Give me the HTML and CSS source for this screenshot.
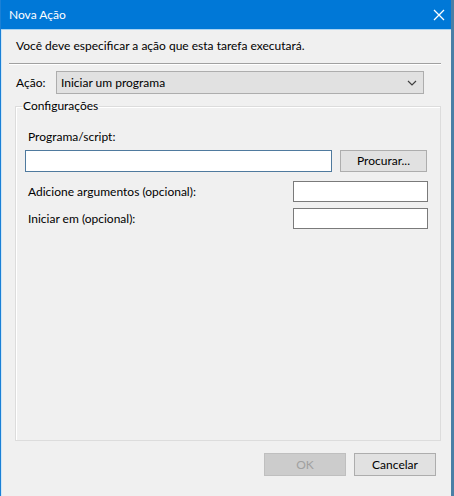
FILE: index.html
```html
<!DOCTYPE html>
<html lang="pt-BR">
<head>
<meta charset="utf-8">
<title>Nova Ação</title>
<link rel="stylesheet" href="styles.css">
</head>
<body>
<div class="window">
  <div class="titlebar">
    <span class="title">Nova Ação</span>
    <span class="close">
      <svg width="12" height="12" viewBox="0 0 12 12"><path d="M1 1 L11 11 M11 1 L1 11" stroke="#fff" stroke-width="1.3" fill="none"/></svg>
    </span>
  </div>
  <div class="content">
    <p class="intro">Você deve especificar a ação que esta tarefa executará.</p>
    <div class="separator"></div>
    <div class="action-row">
      <span class="action-label">Ação:</span>
      <div class="combo">
        <span class="combo-text">Iniciar um programa</span>
        <svg class="chev" width="10" height="6" viewBox="0 0 10 6"><path d="M1 1 L5 5 L9 1" stroke="#404040" stroke-width="1.2" fill="none"/></svg>
      </div>
    </div>
    <fieldset class="group">
      <legend class="legend">Configurações</legend>
      <div class="label-program">Programa/script:</div>
      <div class="program-row">
        <div class="textbox textbox-program"></div>
        <div class="button button-browse">Procurar...</div>
      </div>
      <div class="field-row">
        <span class="field-label">Adicione argumentos (opcional):</span>
        <div class="textbox textbox-small"></div>
      </div>
      <div class="field-row field-row-2">
        <span class="field-label">Iniciar em (opcional):</span>
        <div class="textbox textbox-small"></div>
      </div>
    </fieldset>
    <div class="footer">
      <div class="button button-ok">OK</div>
      <div class="button button-cancel">Cancelar</div>
    </div>
  </div>
</div>
</body>
</html>
```

FILE: styles.css
```css
* { box-sizing: border-box; }
html, body { margin: 0; padding: 0; }
body {
  font-family: Lato, "Noto Sans", sans-serif;
  font-size: 12px;
  color: #000;
  background: #f0f0f0;
}
.window {
  width: 454px;
  height: 496px;
  display: flex;
  flex-direction: column;
  background: #f0f0f0;
  border-left: 1px solid #1a80d6;
  border-right: 3px solid #4a7fa6;
}
.titlebar {
  height: 30px;
  flex: none;
  background: #0078d7;
  display: flex;
  align-items: center;
  justify-content: space-between;
  border-bottom: 1px solid #a9d3f2;
  padding: 0 6px 0 8px;
}
.title {
  color: #fff;
  font-size: 12px;
  line-height: 16px;
}
.close {
  display: flex;
  width: 12px;
  height: 12px;
}
.content {
  flex: 1;
  display: flex;
  flex-direction: column;
  padding: 0 10px 0 2px;
  border-left: 1px solid #cfe6f7;
}
.intro {
  margin: 8px 0 0 12px;
  line-height: 16px;
}
.separator {
  margin: 9px 0 0 5px;
  height: 2px;
  border-top: 1px solid #a0a0a0;
  border-bottom: 1px solid #ffffff;
}
.action-row {
  display: flex;
  align-items: center;
  margin: 6px 0 0 12px;
  height: 23px;
}
.action-label {
  width: 40px;
  line-height: 16px;
}
.combo {
  width: 368px;
  height: 23px;
  background: #e1e1e1;
  border: 1px solid #adadad;
  display: flex;
  align-items: center;
  justify-content: space-between;
  padding: 0 6px 0 4px;
}
.combo-text { line-height: 16px; }
.group {
  margin: 4px 0 0 11px;
  width: 426px;
  height: 343px;
  border: 1px solid #dcdcdc;
  box-shadow: inset 1px 1px 0 #ffffff;
  padding: 0 0 0 9px;
}
.legend {
  padding: 0 1px;
  margin-left: -3px;
  line-height: 16px;
}
.label-program {
  margin: 15px 0 0 3px;
  line-height: 16px;
}
.program-row {
  display: flex;
  align-items: center;
  margin-top: 5px;
}
.textbox {
  background: #fff;
  border: 1px solid #7a7a7a;
}
.textbox-program {
  width: 307px;
  height: 22px;
  border-color: #4f7a9e;
}
.button {
  background: #e1e1e1;
  border: 1px solid #adadad;
  display: flex;
  align-items: center;
  justify-content: center;
  line-height: 16px;
}
.button-browse {
  margin-left: 8px;
  width: 87px;
  height: 22px;
}
.field-row {
  display: flex;
  align-items: center;
  justify-content: space-between;
  margin-top: 9px;
  width: 403px;
}
.field-row-2 { margin-top: 6px; }
.field-label {
  margin-left: 3px;
  line-height: 16px;
}
.textbox-small {
  width: 135px;
  height: 21px;
}
.footer {
  display: flex;
  justify-content: flex-end;
  gap: 8px;
  margin-top: 12px;
  padding-right: 5px;
}
.button-ok {
  width: 82px;
  height: 23px;
  background: #cccccc;
  border-color: #bfbfbf;
  color: #a0a0a0;
}
.button-cancel {
  width: 82px;
  height: 23px;
}
```
